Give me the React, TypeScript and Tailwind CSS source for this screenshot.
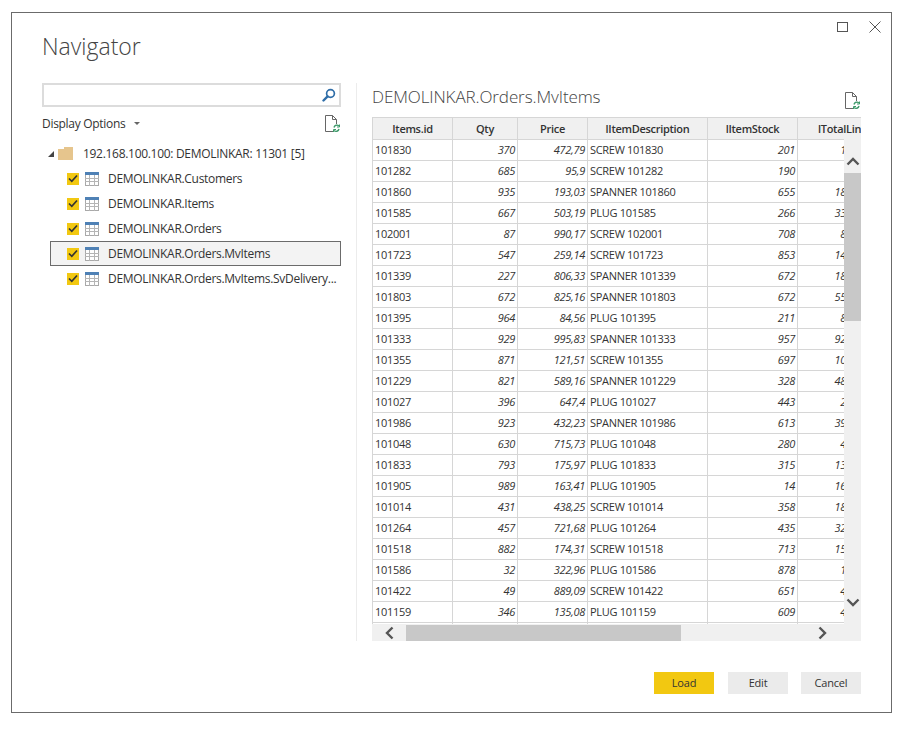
const rows: [string, number, number, string, number][] = [
    ['101830', 370, 472.79, 'SCREW 101830', 201],
    ['101282', 685, 95.9, 'SCREW 101282', 190],
    ['101860', 935, 193.03, 'SPANNER 101860', 655],
    ['101585', 667, 503.19, 'PLUG 101585', 266],
    ['102001', 87, 990.17, 'SCREW 102001', 708],
    ['101723', 547, 259.14, 'SCREW 101723', 853],
    ['101339', 227, 806.33, 'SPANNER 101339', 672],
    ['101803', 672, 825.16, 'SPANNER 101803', 672],
    ['101395', 964, 84.56, 'PLUG 101395', 211],
    ['101333', 929, 995.83, 'SPANNER 101333', 957],
    ['101355', 871, 121.51, 'SCREW 101355', 697],
    ['101229', 821, 589.16, 'SPANNER 101229', 328],
    ['101027', 396, 647.4, 'PLUG 101027', 443],
    ['101986', 923, 432.23, 'SPANNER 101986', 613],
    ['101048', 630, 715.73, 'PLUG 101048', 280],
    ['101833', 793, 175.97, 'PLUG 101833', 315],
    ['101905', 989, 163.41, 'PLUG 101905', 14],
    ['101014', 431, 438.25, 'SCREW 101014', 358],
    ['101264', 457, 721.68, 'PLUG 101264', 435],
    ['101518', 882, 174.31, 'SCREW 101518', 713],
    ['101586', 32, 322.96, 'PLUG 101586', 878],
    ['101422', 49, 889.09, 'SCREW 101422', 651],
    ['101159', 346, 135.08, 'PLUG 101159', 609],
]

const tables = [
    'DEMOLINKAR.Customers',
    'DEMOLINKAR.Items',
    'DEMOLINKAR.Orders',
    'DEMOLINKAR.Orders.MvItems',
    'DEMOLINKAR.Orders.MvItems.SvDelivery...',
]

const comma = (n: number) => String(Math.round(n * 100) / 100).replace('.', ',')

const gridCols = 'grid grid-cols-[81px_65px_70px_120px_90px_89px]'
const cell = 'border-r border-b border-[#d6d6d6] px-[2px] leading-[20px] whitespace-nowrap'

const TableIcon = () => (
    <svg width="14" height="14" viewBox="0 0 14 14" className="flex-none">
        <rect x="0.5" y="0.5" width="13" height="13" fill="#fff" stroke="#a9a9a9" />
        <rect x="0" y="0" width="14" height="3" fill="#4f81b5" />
        <path d="M0 6.5H14M0 9.5H14M4.5 3V14M9.5 3V14" stroke="#b5b5b5" strokeWidth="1" fill="none" />
    </svg>
)

const RefreshDoc = () => (
    <svg width="16" height="18" viewBox="0 0 16 18" fill="none">
        <path d="M9 16.5H1.5V0.5H8.5L12.5 4.5V9" stroke="#666" strokeWidth="1" />
        <path d="M8.5 0.5V4.5H12.5" stroke="#666" strokeWidth="1" />
        <path d="M10 12.5a3 3 0 0 1 5-1.5M15 14a3 3 0 0 1-5 1.5" stroke="#3f9a6b" strokeWidth="1.4" />
        <path d="M15.5 9.5V12H13M9.5 17V14.5H12" stroke="#3f9a6b" strokeWidth="1" />
    </svg>
)

export default function App() {
    return (
        <div className="h-[731px] w-[898px] bg-white pl-[11px] pt-[12px] text-[#333] font-['Open_Sans',sans-serif]">
            <div className="flex h-[701px] w-[881px] flex-col border border-[#6b6b6b]">
                <div className="flex h-[70px] items-start justify-between pl-[30px] pr-[10px]">
                    <h1 className="mt-[17px] text-[23px] leading-[32px] font-light text-[#444]">Navigator</h1>
                    <div className="mt-[8px] flex items-center gap-[21px]">
                        <div className="h-[10px] w-[11px] border border-[#555]" />
                        <svg width="12" height="12" viewBox="0 0 12 12">
                            <path d="M0.5 0.5L11.5 11.5M11.5 0.5L0.5 11.5" stroke="#555" strokeWidth="1" />
                        </svg>
                    </div>
                </div>

                <div className="flex h-[558px]">
                    <div className="w-[345px] flex-none border-r border-[#ececec] pl-[30px] pr-[15px] text-[12px] tracking-[-0.3px]">
                        <div className="flex h-[24px] items-center justify-end border-2 border-[#dcdcdc] pr-[3px]">
                            <svg width="14" height="14" viewBox="0 0 14 14" fill="none">
                                <circle cx="8.5" cy="5.5" r="3.9" stroke="#2f6ea8" strokeWidth="1.7" />
                                <path d="M5.6 8.4L1.5 12.5" stroke="#2f6ea8" strokeWidth="2.4" strokeLinecap="round" />
                            </svg>
                        </div>
                        <div className="mt-[3px] flex h-[28px] items-center justify-between pr-[1px]">
                            <div className="flex items-center">
                                <span>Display Options</span>
                                <span className="ml-[9px] mb-[2px] h-0 w-0 border-x-[3px] border-t-[3px] border-x-transparent border-t-[#666]" />
                            </div>
                            <RefreshDoc />
                        </div>
                        <div className="mt-[4px] flex h-[24px] items-center pl-[6px]">
                            <span className="h-0 w-0 border-b-[6px] border-l-[6px] border-b-[#444] border-l-transparent" />
                            <svg width="16" height="14" viewBox="0 0 16 14" className="ml-[4px] flex-none">
                                <path d="M0 2H6V0H15V13H0Z" fill="#e6c58d" />
                            </svg>
                            <span className="ml-[9px] whitespace-nowrap">192.168.100.100: DEMOLINKAR: 11301 [5]</span>
                        </div>
                        <div className="flex flex-col">
                            {tables.map((name, i) => (
                                <div
                                    key={name}
                                    className={
                                        i === 3
                                            ? 'ml-[8px] flex h-[25px] items-center gap-[6px] border border-[#6b6b6b] bg-[#f3f3f3] pl-[16px] whitespace-nowrap'
                                            : 'ml-[8px] flex h-[25px] items-center gap-[6px] border border-transparent pl-[16px] whitespace-nowrap'
                                    }
                                >
                                    <span className="flex h-[12px] w-[12px] flex-none items-center justify-center bg-[#f2c811]">
                                        <svg width="10" height="9" viewBox="0 0 10 9" fill="none">
                                            <path d="M1 4.5L3.8 7.3L9 1.5" stroke="#333" strokeWidth="1.7" />
                                        </svg>
                                    </span>
                                    <TableIcon />
                                    <span className="ml-[3px]">{name}</span>
                                </div>
                            ))}
                        </div>
                    </div>

                    <div className="flex-1 pl-[15px] pr-[30px]">
                        <div className="flex h-[34px] items-start justify-between pr-[1px]">
                            <h2 className="mt-[1px] text-[17px] leading-[26px] font-light tracking-[-0.1px] text-[#444]">DEMOLINKAR.Orders.MvItems</h2>
                            <div className="mt-[9px]">
                                <RefreshDoc />
                            </div>
                        </div>
                        <div className="relative h-[524px] w-[489px] overflow-hidden text-[11px] tracking-[-0.3px]">
                            <div className={`${gridCols} h-[23px] border-t border-[#d6d6d6] bg-[#f0f0f0] text-center font-semibold`}>
                                {['Items.id', 'Qty', 'Price', 'lItemDescription', 'lItemStock'].map((h, i) => (
                                    <div key={h} className={i === 0 ? `${cell} border-l leading-[21px]` : `${cell} leading-[21px]`}>
                                        {h}
                                    </div>
                                ))}
                                <div className="border-b border-[#d6d6d6] pl-[20px] text-left leading-[21px] whitespace-nowrap">lTotalLine</div>
                            </div>
                            {rows.map(([id, qty, price, desc, stock]) => (
                                <div key={id} className={`${gridCols} h-[21px]`}>
                                    <div className={`${cell} border-l`}>{id}</div>
                                    <div className={`${cell} text-right italic`}>{qty}</div>
                                    <div className={`${cell} text-right italic`}>{comma(price)}</div>
                                    <div className={cell}>{desc}</div>
                                    <div className={`${cell} text-right italic`}>{stock}</div>
                                    <div className={`${cell} pr-[3px] text-right italic`}>{comma(qty * price)}</div>
                                </div>
                            ))}
                            <div className={`${gridCols} h-[21px]`}>
                                {[0, 1, 2, 3, 4, 5].map(c => (
                                    <div key={c} className={c === 0 ? `${cell} border-l` : cell} />
                                ))}
                            </div>

                            <div className="absolute top-[22px] right-0 flex h-[485px] w-[17px] flex-col bg-[#f0f0f0]">
                                <div className="flex h-[34px] items-center justify-center pt-[10px]">
                                    <svg width="14" height="9" viewBox="0 0 14 9" fill="none">
                                        <path d="M1.5 7.5L7 2L12.5 7.5" stroke="#555" strokeWidth="2.4" />
                                    </svg>
                                </div>
                                <div className="h-[148px] bg-[#c8c8c8]" />
                            </div>
                            <div className="absolute top-[465px] right-0 flex h-[40px] w-[17px] items-center justify-center">
                                <svg width="14" height="9" viewBox="0 0 14 9" fill="none">
                                    <path d="M1.5 1.5L7 7L12.5 1.5" stroke="#555" strokeWidth="2.4" />
                                </svg>
                            </div>
                            <div className="absolute bottom-0 left-0 flex h-[17px] w-full items-center bg-[#f0f0f0]">
                                <div className="flex w-[34px] justify-center">
                                    <svg width="9" height="14" viewBox="0 0 9 14" fill="none">
                                        <path d="M7.5 1.5L2 7L7.5 12.5" stroke="#555" strokeWidth="2.4" />
                                    </svg>
                                </div>
                                <div className="h-[16px] w-[275px] bg-[#c8c8c8]" />
                                <div className="ml-[135px] flex w-[12px] justify-center">
                                    <svg width="9" height="14" viewBox="0 0 9 14" fill="none">
                                        <path d="M1.5 1.5L7 7L1.5 12.5" stroke="#555" strokeWidth="2.4" />
                                    </svg>
                                </div>
                            </div>
                        </div>
                    </div>
                </div>

                <div className="flex flex-1 items-start justify-end gap-[13px] pt-[31px] pr-[30px] text-[11px] tracking-[-0.2px]">
                    <button className="mr-[1px] h-[22px] w-[60px] bg-[#f2c811]">Load</button>
                    <button className="h-[22px] w-[60px] bg-[#ebebeb]">Edit</button>
                    <button className="h-[22px] w-[60px] bg-[#ebebeb]">Cancel</button>
                </div>
            </div>
        </div>
    )
}
